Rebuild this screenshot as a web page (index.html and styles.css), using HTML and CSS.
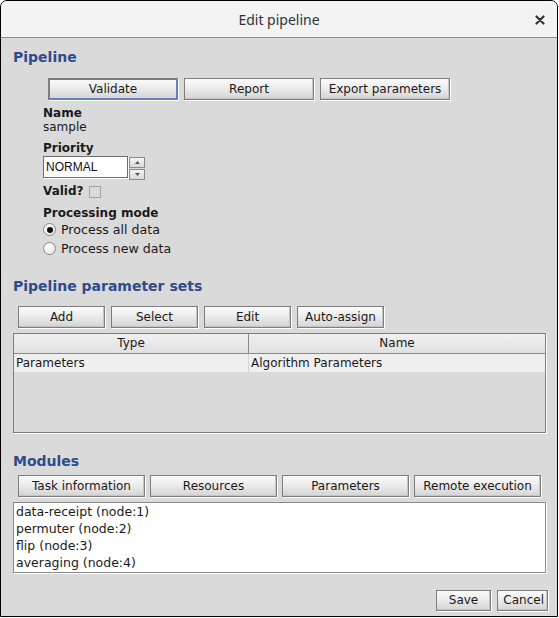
FILE: index.html
```html
<!DOCTYPE html>
<html>
<head>
<meta charset="utf-8">
<title>Edit pipeline</title>
<link rel="stylesheet" href="styles.css">
</head>
<body>
<div class="win">
  <div class="titlebar">
    <span></span>
    <span class="title">Edit pipeline</span>
    <svg class="close" width="10" height="10" viewBox="0 0 10 10"><path d="M1.5 1.5 L8.5 8.5 M8.5 1.5 L1.5 8.5" stroke="#2e3436" stroke-width="2.2" stroke-linecap="round"/></svg>
  </div>
  <div class="content">
    <h2 class="heading h1">Pipeline</h2>
    <div class="btnrow row1">
      <button class="btn focus">Validate</button>
      <button class="btn">Report</button>
      <button class="btn">Export parameters</button>
    </div>
    <div class="form">
      <div class="label">Name</div>
      <div class="value">sample</div>
      <div class="label lbl-priority">Priority</div>
      <div class="spinner">
        <div class="field">NORMAL</div>
        <div class="arrows">
          <div class="arrow up"><svg width="5" height="3" viewBox="0 0 5 3"><path d="M2.5 0 L5 3 L0 3 Z" fill="#555"/></svg></div>
          <div class="arrow down"><svg width="5" height="3" viewBox="0 0 5 3"><path d="M0 0 L5 0 L2.5 3 Z" fill="#555"/></svg></div>
        </div>
      </div>
      <div class="label validrow">Valid? <span class="check"></span></div>
      <div class="label lbl-mode">Processing mode</div>
      <div class="radio"><span class="dot on"></span>Process all data</div>
      <div class="radio"><span class="dot"></span>Process new data</div>
    </div>
    <h2 class="heading h2">Pipeline parameter sets</h2>
    <div class="btnrow row2">
      <button class="btn">Add</button>
      <button class="btn">Select</button>
      <button class="btn">Edit</button>
      <button class="btn">Auto-assign</button>
    </div>
    <div class="table">
      <div class="thead">
        <div class="th c1">Type</div>
        <div class="th c2">Name</div>
      </div>
      <div class="tr">
        <div class="td c1">Parameters</div>
        <div class="td c2">Algorithm Parameters</div>
      </div>
    </div>
    <h2 class="heading h3">Modules</h2>
    <div class="btnrow row3">
      <button class="btn">Task information</button>
      <button class="btn">Resources</button>
      <button class="btn">Parameters</button>
      <button class="btn">Remote execution</button>
    </div>
    <div class="list">
      <div class="item">data-receipt (node:1)</div>
      <div class="item">permuter (node:2)</div>
      <div class="item">flip (node:3)</div>
      <div class="item">averaging (node:4)</div>
    </div>
    <div class="footer">
      <button class="btn save">Save</button>
      <button class="btn cancel">Cancel</button>
    </div>
  </div>
</div>
</body>
</html>
```
FILE: styles.css
```css
html, body {
  margin: 0;
  padding: 0;
  background: #ffffff;
}
body {
  font-family: "DejaVu Sans", sans-serif;
  font-size: 12px;
  color: #1a1a1a;
}
.win {
  width: 558px;
  height: 617px;
  box-sizing: border-box;
  border: 1px solid #000;
  border-radius: 7px 7px 0 0;
  overflow: hidden;
  background: #dadada;
  display: flex;
  flex-direction: column;
}
.titlebar {
  height: 36px;
  border-bottom: 1px solid #8c8c8c;
  background: #f3f3f3;
  display: grid;
  grid-template-columns: 1fr auto 1fr;
  align-items: center;
}
.title {
  font-family: "Noto Sans", sans-serif;
  font-size: 14px;
  color: #2e3436;
  padding-top: 1px;
}
.close {
  justify-self: end;
  margin-right: 12px;
  margin-top: 2px;
}
.content {
  flex: 1;
  display: flex;
  flex-direction: column;
}
.heading {
  margin: 0;
  font-size: 14px;
  font-weight: bold;
  line-height: 17px;
  color: #2f4b8c;
  padding-left: 12px;
}
.h1 { margin-top: 11px; }
.h2 { margin-top: 20px; }
.h3 { margin-top: 20px; }
.btnrow {
  display: flex;
  gap: 6px;
}
.btn {
  font-family: "DejaVu Sans", sans-serif;
  font-size: 12px;
  color: #1a1a1a;
  height: 22px;
  padding: 0;
  box-sizing: border-box;
  border: 1px solid #7e7e7e;
  background: linear-gradient(to bottom, #fbfbfb 0%, #ececec 45%, #d4d4d4 100%);
  box-shadow: 1px 1px 0 #ffffff, inset -1px -1px 0 #c4c4c4;
  line-height: 20px;
  text-align: center;
}
.btn.focus {
  box-shadow: 1px 1px 0 #ffffff, inset 0 0 0 1px #5f80c4;
}
.row1 {
  margin-top: 12px;
  padding-left: 47px;
}
.row1 .btn { width: 130px; }
.form {
  padding-left: 42px;
  margin-top: 6px;
  display: flex;
  flex-direction: column;
  align-items: flex-start;
}
.label {
  font-weight: bold;
  line-height: 14px;
}
.value {
  line-height: 14px;
}
.lbl-priority { margin-top: 7px; }
.spinner {
  margin-top: 1px;
  display: flex;
  gap: 1px;
}
.field {
  width: 85px;
  height: 22px;
  box-sizing: border-box;
  border: 1px solid #6e6e6e;
  background: #fff;
  box-shadow: 1px 1px 0 #ffffff;
  font-family: "Liberation Sans", sans-serif;
  font-size: 12px;
  line-height: 20px;
  padding-left: 2px;
  color: #111;
}
.arrows {
  display: flex;
  flex-direction: column;
  gap: 1px;
  padding-top: 1px;
}
.arrow {
  width: 14px;
  height: 9px;
  border: 1px solid #8a8a8a;
  background: linear-gradient(#f4f4f4, #d8d8d8);
  display: flex;
  align-items: center;
  justify-content: center;
}
.validrow {
  margin-top: 4px;
  display: flex;
  align-items: center;
  gap: 5px;
}
.check {
  display: inline-block;
  width: 10px;
  height: 10px;
  border: 1px solid #a4a4a4;
  background: #dadada;
  margin-top: 2px;
}
.lbl-mode { margin-top: 8px; }
.radio {
  display: flex;
  align-items: center;
  gap: 5px;
  height: 19px;
  line-height: 14px;
  font-size: 12.6px;
}
.radio:first-of-type { margin-top: 2px; }
.dot {
  width: 11px;
  height: 11px;
  border: 1px solid #8a8a8a;
  border-radius: 50%;
  background: radial-gradient(circle at 40% 35%, #ffffff, #e2e2e2);
  display: flex;
  align-items: center;
  justify-content: center;
}
.dot.on::after {
  content: "";
  width: 6px;
  height: 6px;
  border-radius: 50%;
  background: #111;
}
.row2 {
  margin-top: 11px;
  padding-left: 17px;
}
.row2 .btn { width: 87px; }
.table {
  margin: 5px 0 0 12px;
  width: 533px;
  height: 100px;
  box-sizing: border-box;
  border: 1px solid #7e7e7e;
  box-shadow: 1px 1px 0 #ffffff;
  background: #dadada;
}
.thead {
  display: flex;
  height: 20px;
  box-sizing: border-box;
  border-bottom: 1px solid #8a8a8a;
  background: linear-gradient(#f0f0f0, #e0e0e0);
}
.th {
  text-align: center;
  line-height: 19px;
}
.c1 { width: 234px; }
.c2 { flex: 1; }
.th.c1 { border-right: 1px solid #8a8a8a; }
.tr {
  display: flex;
  height: 18px;
  background: #efefef;
}
.td {
  line-height: 18px;
  padding-left: 2px;
  box-sizing: border-box;
}
.td.c1 { width: 235px; border-right: 1px solid #d6d6d6; }
.row3 {
  margin-top: 5px;
  padding-left: 17px;
  gap: 5px;
}
.row3 .btn { width: 127px; }
.list {
  margin: 5px 0 0 12px;
  width: 533px;
  height: 71px;
  box-sizing: border-box;
  border: 1px solid #8a8a8a;
  box-shadow: 1px 1px 0 #ffffff;
  background: #fff;
  padding: 0 2px;
}
.item {
  line-height: 17px;
  font-size: 12.5px;
}
.footer {
  display: flex;
  justify-content: flex-end;
  gap: 6px;
  margin-top: 17px;
  padding-right: 9px;
}
.footer .btn { height: 21px; line-height: 19px; }
.save { width: 55px; }
.cancel { width: 51px; text-align: right; padding-right: 3px; }
```
